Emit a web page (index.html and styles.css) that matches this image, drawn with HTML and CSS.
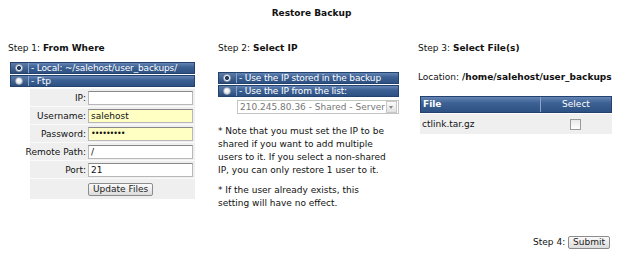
FILE: index.html
```html
<!doctype html>
<html>
    <head>
        <title>Restore Backup</title>
        <meta charset="UTF-8">
        <link rel="stylesheet" href="styles.css">
    </head>

    <body>
        <h1 class="title">Restore Backup</h1>

        <div class="steps">
            <!--Step 1-->
            <div class="col one">
                <div class="step">Step 1: <b>From Where</b></div>
                <div class="bar"><span class="radio on"></span><span class="label">- Local: ~/salehost/user_backups/</span></div>
                <div class="bar"><span class="radio"></span><span class="label">- Ftp</span></div>
                <div class="ftp">
                    <div class="row"><span class="key">IP:</span><span class="field"></span></div>
                    <div class="row"><span class="key">Username:</span><span class="field fill">salehost</span></div>
                    <div class="row"><span class="key">Password:</span><span class="field fill dots">&bull;&bull;&bull;&bull;&bull;&bull;&bull;&bull;&bull;</span></div>
                    <div class="row"><span class="key">Remote Path:</span><span class="field">/</span></div>
                    <div class="row"><span class="key">Port:</span><span class="field">21</span></div>
                    <div class="row btnrow"><span class="key"></span><span class="btn">Update Files</span></div>
                </div>
            </div>

            <!--Step 2-->
            <div class="col two">
                <div class="step">Step 2: <b>Select IP</b></div>
                <div class="bar"><span class="radio on"></span><span class="label">- Use the IP stored in the backup</span></div>
                <div class="bar"><span class="radio"></span><span class="label">- Use the IP from the list:</span></div>
                <div class="select"><span class="val">210.245.80.36 - Shared - Server</span><span class="arrow"></span></div>
                <p class="note">* Note that you must set the IP to be shared if you want to add multiple users to it. If you select a non-shared IP, you can only restore 1 user to it.</p>
                <p class="note">* If the user already exists, this<br>setting will have no effect.</p>
            </div>

            <!--Step 3-->
            <div class="col three">
                <div class="step">Step 3: <b>Select File(s)</b></div>
                <div class="loc">Location: <b>/home/salehost/user_backups</b></div>
                <div class="files">
                    <div class="head"><span class="name">File</span><span class="pick">Select</span></div>
                    <div class="item"><span class="name">ctlink.tar.gz</span><span class="pick"><span class="check"></span></span></div>
                </div>
            </div>
        </div>

        <div class="submit">Step 4: <span class="btn">Submit</span></div>
    </body>
</html>
```

FILE: styles.css
```css
body{
    margin: 0;
    font-family: "DejaVu Sans", Verdana, sans-serif;
    font-size: 9px;
    color: #111;
    background: #fff;
}

.title{
    margin: 8px 0 0;
    font-size: 9px;
    line-height: 11px;
    text-align: center;
}

.steps{
    display: flex;
    padding-left: 8px;
    margin-top: 24px;
}

.col{
    display: flex;
    flex-direction: column;
}
.one{
    width: 187px;
}
.two{
    width: 181px;
    margin-left: 23px;
}
.three{
    width: 195px;
    margin-left: 19px;
}

.step{
    line-height: 11px;
    margin-bottom: 8px;
}
.two .step{
    margin-bottom: 18px;
}

/* Blue option bars */
.bar{
    display: flex;
    height: 10px;
    margin-bottom: 1px;
    border: 1px solid #24426e;
    background: linear-gradient(#6485b5, #3d6194 40%, #2e5183);
    color: #fff;
    line-height: 10px;
}
.one .bar{
    margin-left: 2px;
}
.bar .radio{
    width: 17px;
    border-right: 1px solid #8aa3c8;
    background: linear-gradient(#5a7aa8, #2c4c7c);
    position: relative;
}
.bar .label{
    padding-left: 2px;
    white-space: nowrap;
    letter-spacing: -0.15px;
}
.radio::after{
    content: "";
    position: absolute;
    left: 4px;
    top: 1px;
    width: 6px;
    height: 6px;
    border-radius: 50%;
    border: 1px solid #9aa8b8;
    background: radial-gradient(circle at 40% 35%, #fff, #d4d8de);
}
.radio.on::after{
    background: radial-gradient(circle, #203a60 0 1.8px, #fff 2.3px, #d4d8de);
}

/* Ftp form */
.ftp{
    margin: 0 0 0 22px;
    background: #efefef;
}
.row{
    display: flex;
    align-items: center;
    height: 17px;
    border-top: 1px solid #fafafa;
}
.key{
    display: flex;
    justify-content: flex-end;
    width: 56px;
    padding-right: 2px;
    white-space: nowrap;
}
.field{
    width: 101px;
    height: 12px;
    border: 1px solid #b8b8b8;
    border-top-color: #888;
    background: #fff;
    line-height: 12px;
    padding-left: 2px;
}
.field.fill{
    background: #ffffc4;
}
.dots{
    font-size: 8px;
    letter-spacing: -1px;
}
.btnrow{
    height: 20px;
}
.btn{
    display: inline-block;
    border: 1px solid #8c8c8c;
    border-radius: 2px;
    background: linear-gradient(#fafafa, #dcdcdc);
    padding: 0 4px;
    line-height: 11px;
    color: #222;
}

/* IP select */
.select{
    display: flex;
    align-items: center;
    margin: 2px 0 0 19px;
    height: 12px;
    border: 1px solid #c4c4c4;
    color: #777;
    line-height: 12px;
}
.select .val{
    flex: 1;
    padding-left: 2px;
    white-space: nowrap;
    overflow: hidden;
}
.select .arrow{
    width: 9px;
    height: 10px;
    margin-right: 1px;
    border: 1px solid #c8c8c8;
    background: linear-gradient(#fbfbfb, #e2e2e2);
    position: relative;
}
.select .arrow::after{
    content: "";
    position: absolute;
    left: 2px;
    top: 4px;
    border-left: 2.5px solid transparent;
    border-right: 2.5px solid transparent;
    border-top: 3px solid #888;
}

.note{
    margin: 11px 0 0;
    line-height: 13px;
}
.note + .note{
    margin-top: 7px;
}

/* Files */
.loc{
    margin-top: 10px;
    line-height: 11px;
    white-space: nowrap;
}
.files{
    margin: 13px 0 0 2px;
    width: 192px;
}
.files .head,
.files .item{
    display: flex;
}
.files .head{
    height: 15px;
    line-height: 15px;
    border: 1px solid #24426e;
    background: linear-gradient(#6485b5, #3d6194 40%, #2e5183);
    color: #fff;
}
.files .head .name{
    font-weight: bold;
    border-right: 1px solid #8aa3c8;
}
.files .item{
    height: 20px;
    line-height: 20px;
    background: #efefef;
    margin-top: 1px;
}
.files .name{
    width: 117px;
    padding-left: 2px;
}
.files .pick{
    flex: 1;
    text-align: center;
}
.check{
    display: inline-block;
    width: 9px;
    height: 9px;
    vertical-align: middle;
    border: 1px solid #9a9a9a;
    background: linear-gradient(#e8e8e8, #fff);
}

.submit{
    text-align: right;
    padding-right: 13px;
    margin-top: 26px;
}
```
